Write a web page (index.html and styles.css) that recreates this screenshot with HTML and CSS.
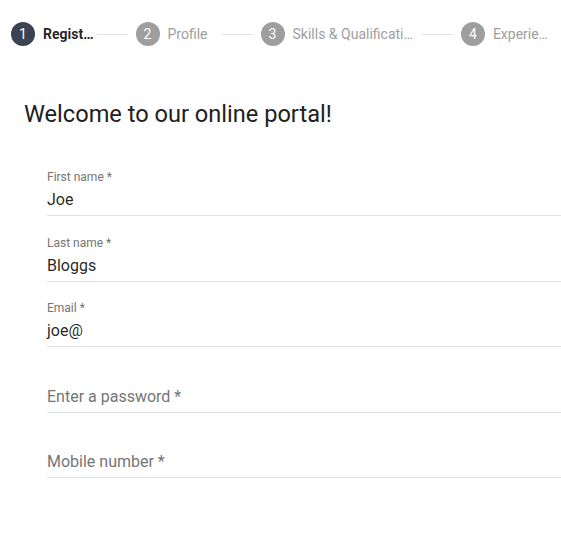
FILE: index.html
```html
<!DOCTYPE html>
<html lang="en">
<head>
<meta charset="utf-8">
<title>Registration</title>
<link rel="stylesheet" href="styles.css">
</head>
<body>
<div class="stepper">
  <div class="step active">
    <span class="circle">1</span>
    <span class="label label-first">Regist…</span>
  </div>
  <span class="line"></span>
  <div class="step">
    <span class="circle">2</span>
    <span class="label label-profile">Profile</span>
  </div>
  <span class="line"></span>
  <div class="step">
    <span class="circle">3</span>
    <span class="label label-skills">Skills &amp; Qualificati…</span>
  </div>
  <span class="line"></span>
  <div class="step">
    <span class="circle">4</span>
    <span class="label">Experie…</span>
  </div>
</div>

<h1 class="title">Welcome to our online portal!</h1>

<form class="form">
  <div class="field">
    <div class="field-label">First name *</div>
    <div class="field-value">Joe</div>
  </div>
  <div class="field">
    <div class="field-label">Last name *</div>
    <div class="field-value">Bloggs</div>
  </div>
  <div class="field">
    <div class="field-label">Email *</div>
    <div class="field-value">joe@</div>
  </div>
  <div class="field">
    <div class="field-label"></div>
    <div class="field-value placeholder">Enter a password *</div>
  </div>
  <div class="field">
    <div class="field-label"></div>
    <div class="field-value placeholder">Mobile number *</div>
  </div>
</form>
</body>
</html>
```

FILE: styles.css
```css
html, body {
  margin: 0;
  padding: 0;
  background: #ffffff;
}

body {
  font-family: Roboto, "Liberation Sans", Arial, sans-serif;
  color: rgba(0, 0, 0, 0.87);
  overflow: hidden;
}

.stepper {
  display: flex;
  align-items: center;
  height: 68px;
  padding-left: 11px;
  white-space: nowrap;
}

.step {
  display: flex;
  align-items: center;
  gap: 8px;
}

.circle {
  width: 24px;
  height: 24px;
  border-radius: 50%;
  background: #9e9e9e;
  color: #ffffff;
  font-size: 14px;
  line-height: 24px;
  text-align: center;
  flex: none;
}

.step.active .circle {
  background: #3b4252;
}

.label {
  font-size: 14px;
  color: #9e9e9e;
  margin-right: 12px;
}

.step.active .label {
  color: rgba(0, 0, 0, 0.87);
  font-weight: 700;
}

.label-first {
  margin-right: 3px;
}

.label-profile {
  margin-right: 14px;
}

.label-skills {
  margin-right: 9px;
}

.line {
  width: 31px;
  height: 1px;
  background: #e3e3e3;
  margin-right: 8px;
  flex: none;
}

.title {
  margin: 30px 0 0 24px;
  font-size: 23.6px;
  line-height: 32px;
  font-weight: 400;
  color: #212121;
}

.form {
  margin-top: 40px;
  padding-left: 47px;
}

.field {
  border-bottom: 1px solid #e0e0e0;
  padding-bottom: 5px;
  margin-bottom: 19.5px;
}

.field-label {
  height: 14px;
  font-size: 12px;
  line-height: 14px;
  color: #757575;
  margin-bottom: 6px;
}

.field-value {
  font-size: 16px;
  line-height: 20px;
  color: rgba(0, 0, 0, 0.87);
}

.field-value.placeholder {
  color: #757575;
}
```
